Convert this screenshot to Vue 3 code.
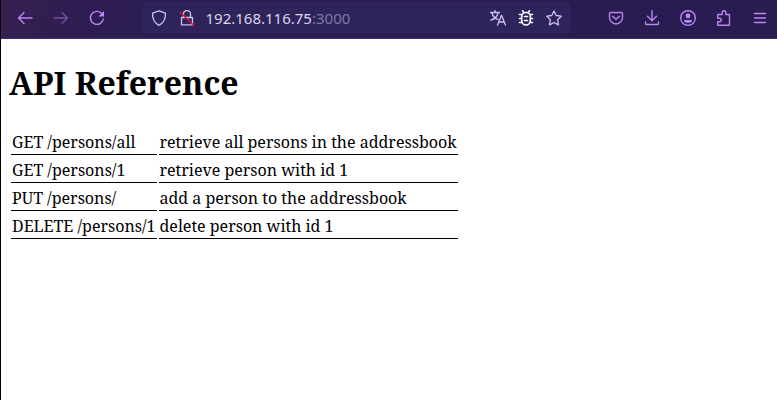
<script setup>
const rows = [
  ['GET /persons/all', 'retrieve all persons in the addressbook'],
  ['GET /persons/1', 'retrieve person with id 1'],
  ['PUT /persons/', 'add a person to the addressbook'],
  ['DELETE /persons/1', 'delete person with id 1'],
]
</script>

<template>
  <div class="window">
    <header class="toolbar">
      <nav class="nav">
        <svg class="icon" viewBox="0 0 16 16"><path d="M15 8H1.500M7 2.500 1.500 8 7 13.500" /></svg>
        <svg class="icon dim" viewBox="0 0 16 16"><path d="M1 8h13.500M9 2.500 14.500 8 9 13.500" /></svg>
        <svg class="icon" viewBox="0 0 16 16"><path d="M14.300 9A6.500 6.500 0 1 1 12.600 3.400" /><path class="solid" d="M15 1v5.500H9.500z" /></svg>
      </nav>
      <div class="urlbar">
        <svg class="icon" viewBox="0 0 16 16"><path d="M8 .8 14.400 3.200C14.700 8.500 13 12.900 8 15.300 3 12.900 1.300 8.500 1.600 3.200z" /></svg>
        <svg class="icon lock" viewBox="0 0 16 16"><path d="M2.500 7.500h11v7.300h-11zM4.500 7.500V4a3.500 3.500 0 0 1 7 0v3.500" /><path class="slash" d="M1.200 2.300 14.800 15.500" /></svg>
        <span class="address">192.168.116.75<span class="port">:3000</span></span>
        <div class="actions">
          <svg class="icon" viewBox="0 0 16 16"><path d="M.5 2.500h9M5 .5v2M2 3c.7 3.200 3 5.500 6 6.500M8 3C7.300 6.500 4.500 9 .8 10.200M7.500 15.200 11.300 5.500h.4l3.800 9.700M8.800 12h5.400" /></svg>
          <svg class="icon bug" viewBox="0 0 16 16"><path d="M3.700 6.500a4.300 4 0 0 1 8.600 0v4a4.300 4.500 0 0 1-8.600 0zM4.500 .8l1.700 1.900M11.500 .8 9.800 2.700M1.500 4.500h2.700M1.500 8.500h2.200M1.500 12.500h2.700M11.800 4.500h2.700M12.300 8.500h2.200M11.800 12.500h2.700M6.500 6.500h3M6.500 10.500h3" /></svg>
          <svg class="icon" viewBox="0 0 16 16"><path d="M8 1 10.200 5.500l5 .7-3.600 3.500 .9 5.200L8 12.500l-4.500 2.400.9-5.200L.8 6.200l5-.7z" /></svg>
        </div>
      </div>
      <div class="tools">
        <svg class="icon" viewBox="0 0 16 16"><path d="M2.500 2.500h11a1 1 0 0 1 1 1V7.500a6.500 6.500 0 0 1-13 0V3.500a1 1 0 0 1 1-1zM4.700 6.200 8 9.300l3.300-3.100" /></svg>
        <svg class="icon" viewBox="0 0 16 16"><path d="M8 .7v9.800M3.500 6.300 8 10.700l4.500-4.400M1.500 12v1.500a1 1 0 0 0 1 1h11a1 1 0 0 0 1-1V12" /></svg>
        <svg class="icon" viewBox="0 0 16 16"><circle cx="8" cy="8" r="7.300" /><circle class="solid" cx="8" cy="6" r="2.400" /><path class="solid" d="M4 10h8v1.200A5 5 0 0 1 8 13a5 5 0 0 1-4-1.800z" /></svg>
        <svg class="icon" viewBox="0 0 16 16"><path d="M1.700 4.500h4.500V2.500a1.800 1.800 0 0 1 3.600 0v2h3.700v10.700H1.700v-3.400h1.800a1.800 1.800 0 0 0 0-3.600H1.700z" /></svg>
        <svg class="icon menu" viewBox="0 0 16 16"><path d="M2.500 3.500h11M2.500 8h11M2.500 12.500h11" /></svg>
      </div>
    </header>
    <main class="page">
      <h1>API Reference</h1>
      <table>
        <tbody>
          <tr v-for="row in rows" :key="row[0]">
            <td class="route">{{ row[0] }}</td>
            <td class="summary">{{ row[1] }}</td>
          </tr>
        </tbody>
      </table>
    </main>
  </div>
</template>

<style>
body { margin: 0; background: #fff; }
</style>

<style scoped>
.window { box-sizing: border-box; height: 400px; border-left: 1px solid #000; background: #fff; overflow: hidden; }
.toolbar {
  box-sizing: border-box; height: 39px; display: flex; align-items: flex-start;
  border-bottom: 1px solid #432c78;
  background: linear-gradient(100deg, #35204f 0, #2d1d52 12%, #291c50 35%, #291c50 100%);
}
.nav { width: 142px; height: 36px; box-sizing: border-box; padding-left: 16px; display: flex; align-items: center; gap: 20px; }
.icon { width: 16px; height: 16px; flex: none; fill: none; stroke: #bd83f5; stroke-width: 1.4; stroke-linecap: round; stroke-linejoin: round; }
.dim { opacity: .48; }
.icon .solid { fill: #bd83f5; stroke: none; }
.urlbar { width: 427px; height: 32px; margin-top: 2px; box-sizing: border-box; padding: 0 8px; border-radius: 4px; background: #2e245b; display: flex; align-items: center; }
.urlbar .icon { stroke: #cdc1ed; stroke-width: 1.3; }
.urlbar .lock { margin-left: 12px; }
.urlbar .icon .slash { stroke: #e5123e; stroke-width: 1.5; }
.urlbar .bug { stroke: #fbf9ff; stroke-width: 1.6; }
.address { margin-left: 10.500px; font: 15px/20px "Noto Sans", sans-serif; color: #dcd5ed; white-space: nowrap; }
.port { color: #8178a4; }
.actions { margin-left: auto; display: flex; gap: 12px; }
.tools { height: 36px; margin-left: 38px; display: flex; align-items: center; gap: 20px; }
.page { padding: 0 8px; font-family: "Noto Serif", "Droid Serif", "DejaVu Serif Condensed", "DejaVu Serif", serif; color: #000; }
h1 { margin: 22px 0; font-size: 32px; line-height: 44px; font-weight: bold; white-space: nowrap; }
table { border-spacing: 2px; table-layout: fixed; width: 451px; font-size: 16px; }
td { box-sizing: border-box; height: 26px; padding: 1px; border-bottom: 1px solid #000; line-height: 22px; white-space: nowrap; }
.route { width: 146px; }
.summary { padding-left: .5px; }
</style>
